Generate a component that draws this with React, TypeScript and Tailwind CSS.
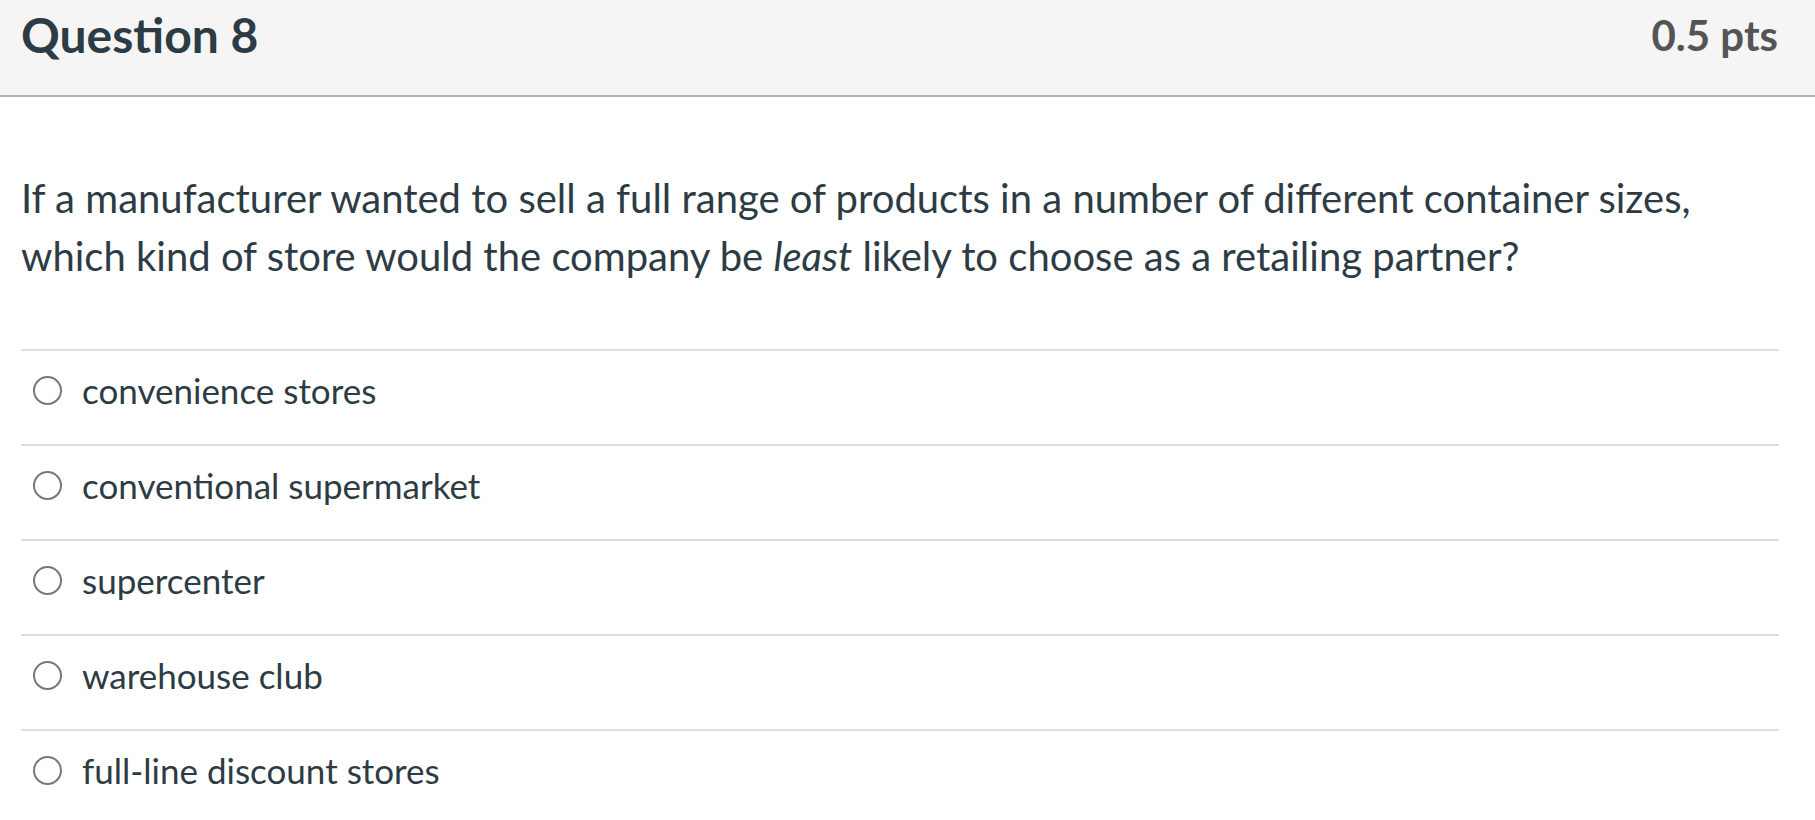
import React from 'react';

const options = [
  'convenience stores',
  'conventional supermarket',
  'supercenter',
  'warehouse club',
  'full-line discount stores',
];

export default function App() {
  return (
    <div className="min-h-screen bg-white text-[#2d3b45] font-['Lato',sans-serif]">
      {/* Question header */}
      <div className="flex items-center justify-between h-[97px] bg-[#f5f5f5] border-b-2 border-[#b0b0b0] pl-[21px] pr-[37px]">
        <h2 className="text-[48px] font-bold leading-none pb-[26px]">Question 8</h2>
        <div className="text-[42px] font-bold leading-none text-[#555555] pb-[26px]">0.5 pts</div>
      </div>

      <div className="pl-[21px] pr-[36px]">
        {/* Question text */}
        <p className="pt-[72px] pb-[64px] text-[40px] leading-[58px]">
          If a manufacturer wanted to sell a full range of products in a number of different container sizes,
          which kind of store would the company be <em>least</em> likely to choose as a retailing partner?
        </p>

        {/* Answers */}
        <div>
          {options.map((opt) => (
            <label key={opt} className="flex items-center h-[95px] border-t-2 border-[#dddddd] pb-[14px]">
              <span className="ml-[12px] w-[29px] h-[29px] rounded-full border-2 border-[#777777] bg-white shrink-0" />
              <span className="ml-[20px] text-[35px]">{opt}</span>
            </label>
          ))}
        </div>
      </div>
    </div>
  );
}
